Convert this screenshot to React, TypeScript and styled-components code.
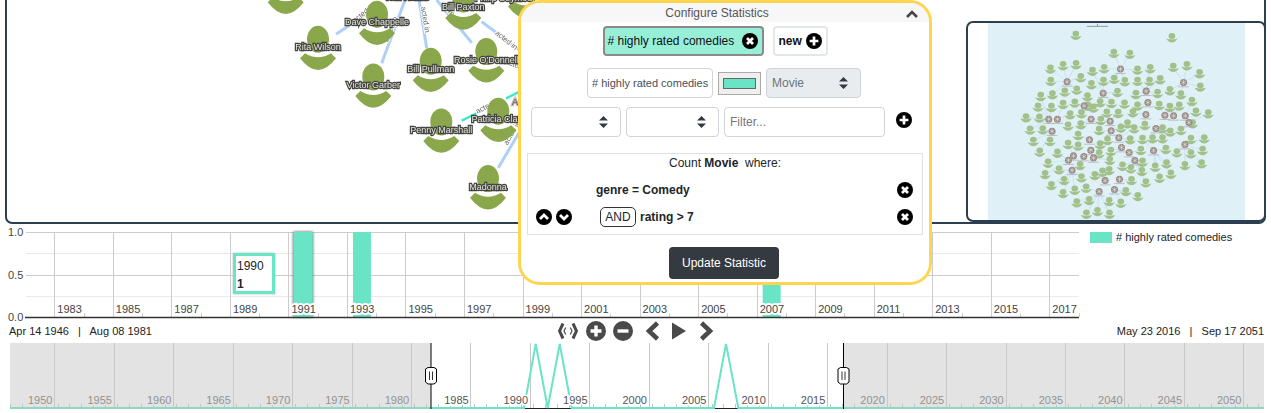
import React from 'react';
import styled, { createGlobalStyle } from 'styled-components';

const TEAL = '#69e4c5';

const GlobalStyle = createGlobalStyle`
  html, body {
    margin: 0;
    padding: 0;
    background: #fff;
    overflow: hidden;
    font-family: "Liberation Sans", Arial, sans-serif;
    color: #212529;
  }
`;

const Page = styled.div`
  position: relative;
  width: 1271px;
  height: 413px;
  overflow: hidden;
`;

/* ---------- network graph ---------- */

const GraphPanel = styled.section`
  position: relative;
  box-sizing: border-box;
  height: 227px;
  margin: -3px 5px 0 5px;
  border: 2px solid #2c3e50;
  border-radius: 0 0 7px 7px;
  overflow: hidden;
`;

const GraphCanvas = styled.svg`
  display: block;
  filter: blur(0.35px);
`;

const NodeLabel = styled.text`
  font-size: 9px;
  text-anchor: middle;
  fill: #e4e6d4;
  stroke: #444;
  stroke-width: 2.4px;
  paint-order: stroke;
`;

const MovieLabel = styled(NodeLabel)`
  fill: #7a3a3a;
  stroke: #bbb;
`;

const EdgeLabel = styled.text`
  font-size: 7.5px;
  text-anchor: middle;
  fill: #666;
  stroke: #fff;
  stroke-width: 2px;
  paint-order: stroke;
`;

interface Person {
  name: string;
  x: number;
  y: number;
}

const people: Person[] = [
  { name: '', x: 285.7, y: -8.7 },
  { name: '', x: 526, y: -4.5 },
  { name: 'Rita Wilson', x: 318, y: 47.3 },
  { name: 'Dave Chappelle', x: 377, y: 22.3 },
  { name: 'Victor Garber', x: 373.3, y: 85 },
  { name: 'Bill Pullman', x: 430.7, y: 69.3 },
  { name: "Rosie O'Donnell", x: 486.3, y: 59.7 },
  { name: 'Bill Paxton', x: 463.3, y: 7 },
  { name: 'Penny Marshall', x: 441.3, y: 130 },
  { name: 'Patricia Clark', x: 498.3, y: 119.3 },
  { name: 'Madonna', x: 488, y: 186.7 },
];

const blueEdges = [
  [336, 34.3, 380, 5],
  [381.7, 63.3, 405, 0],
  [426.7, 48.3, 419, 0],
  [471.7, 42.7, 436.7, 0],
  [481.7, 21.7, 530, 58],
  [498.3, 167.7, 520, 131],
];

const tealEdges = [[461.7, 120.7, 483.3, 110], [506, 98.3, 525, 89]];

function PersonMark({ x, y }: { x: number; y: number }) {
  return (
    <g fill="#8aa84b">
      <ellipse cx={x} cy={y - 8.1} rx={11} ry={13.5} />
      <path
        d={`M${x - 18} ${y + 11}L${x - 13} ${y + 6}Q${x} ${y + 14} ${x + 13} ${y + 6}
            L${x + 18} ${y + 11}Q${x} ${y + 34.4} ${x - 18} ${y + 11}Z`}
      />
    </g>
  );
}

function Graph() {
  return (
    <GraphCanvas width={1257} height={223} viewBox="7 -1 1257 223">
      {blueEdges.map((e, i) => (
        <line key={i} x1={e[0]} y1={e[1]} x2={e[2]} y2={e[3]} stroke="#aed0f7" strokeWidth={3} />
      ))}
      {tealEdges.map((e, i) => (
        <line key={i} x1={e[0]} y1={e[1]} x2={e[2]} y2={e[3]} stroke="#3fe8d0" strokeWidth={2.5} />
      ))}
      <EdgeLabel transform="translate(365 15) rotate(-38)">acted in</EdgeLabel>
      <EdgeLabel transform="translate(393 30) rotate(-68)">acted in</EdgeLabel>
      <EdgeLabel transform="translate(423 20) rotate(81)">acted in</EdgeLabel>
      <EdgeLabel transform="translate(451 16) rotate(53)">acted in</EdgeLabel>
      <EdgeLabel transform="translate(505 42) rotate(38)">acted in</EdgeLabel>
      <EdgeLabel transform="translate(517 68) rotate(20)">acted in</EdgeLabel>
      <EdgeLabel transform="translate(489 108) rotate(-26)">acted in</EdgeLabel>
      <EdgeLabel transform="translate(514 134) rotate(-60)">acted in</EdgeLabel>
      {people.map((p) => (
        <PersonMark key={`${p.x}`} x={p.x} y={p.y} />
      ))}
      <NodeLabel x={407} y={0}>Tom Hanks</NodeLabel>
      <NodeLabel x={505} y={1}>Philip Seymour</NodeLabel>
      <MovieLabel x={531} y={105}>A League</MovieLabel>
      {people.filter((p) => p.name).map((p) => (
        <NodeLabel key={p.name} x={p.x} y={p.y + 3}>{p.name}</NodeLabel>
      ))}
    </GraphCanvas>
  );
}

/* ---------- minimap ---------- */

const Minimap = styled.aside`
  position: absolute;
  top: 21px;
  left: 966px;
  box-sizing: border-box;
  width: 300px;
  height: 201px;
  border: 2px solid #2c3e50;
  border-radius: 7px;
  background: #fff;
  display: flex;
  justify-content: center;
  overflow: hidden;
`;

const MiniCanvas = styled.svg`
  display: block;
  background: #dff0f7;
  filter: blur(0.45px);
`;

const greens = [
  [345, 60], [633, 67], [459, 114], [507, 117], [269, 161], [307, 151], [346, 148], [395, 168], [430, 160], [530, 164],
  [568, 160], [637, 156], [678, 151], [716, 175], [270, 198], [360, 187], [392, 208], [428, 198], [460, 192], [492, 199],
  [530, 198], [566, 198], [598, 193], [718, 215], [240, 243], [275, 238], [312, 230], [348, 224], [380, 244], [470, 231],
  [525, 237], [590, 234], [627, 226], [660, 238], [693, 258], [232, 275], [272, 276], [307, 267], [342, 263], [382, 272],
  [418, 262], [452, 264], [491, 266], [530, 272], [595, 270], [627, 276], [655, 272], [196, 307], [236, 308], [328, 298],
  [362, 295], [398, 278], [438, 293], [472, 294], [516, 292], [705, 290], [742, 295], [208, 344], [246, 343], [322, 332],
  [360, 328], [420, 315], [480, 338], [500, 325], [520, 340], [552, 330], [605, 340], [628, 350], [660, 345], [695, 325],
  [218, 378], [268, 378], [352, 360], [415, 345], [440, 375], [508, 373], [545, 372], [575, 370], [605, 370], [690, 372],
  [730, 370], [237, 410], [290, 413], [322, 387], [352, 392], [418, 388], [450, 408], [540, 405], [615, 402], [648, 412],
  [690, 415], [725, 405], [262, 443], [295, 463], [358, 450], [415, 415], [447, 435], [485, 452], [545, 440], [583, 455],
  [617, 445], [672, 450], [722, 445], [253, 477], [310, 495], [362, 487], [402, 480], [445, 465], [510, 460], [543, 468],
  [596, 488], [630, 476], [272, 510], [342, 524], [376, 518], [512, 495], [555, 502], [307, 534], [495, 528], [531, 543],
  [348, 562], [385, 555], [445, 558], [480, 563], [377, 596], [410, 588], [446, 596], [425, 470],
];

const movies = [
  [479, 162], [319, 200], [668, 202], [427, 234], [556, 228], [561, 262], [370, 272], [264, 312], [290, 312], [391, 312],
  [448, 318], [555, 298], [612, 300], [638, 302], [673, 302], [684, 322], [585, 340], [451, 347], [274, 348], [474, 368],
  [386, 374], [672, 388], [482, 397], [505, 412], [578, 406], [390, 405], [338, 422], [323, 435], [369, 424], [398, 428],
  [522, 436], [334, 465], [433, 496], [476, 492], [461, 523], [415, 529],
];

function nearestMovie(x: number, y: number) {
  let best = movies[0];
  let bestDist = Infinity;
  movies.forEach((m) => {
    const d = (m[0] - x) ** 2 + (m[1] - y) ** 2;
    if (d < bestDist) {
      bestDist = d;
      best = m;
    }
  });
  // The two loose people at the top have no movie close by.
  return bestDist < 100 * 100 ? best : null;
}

function MiniGraph() {
  return (
    <MiniCanvas width={257} height={197} viewBox="82 24 770 590">
      <line x1={378} y1={34} x2={442} y2={34} stroke="#9a9a9a" strokeWidth={3} />
      <line x1={410} y1={26} x2={410} y2={34} stroke="#9a9a9a" strokeWidth={3} />
      {greens.map(([x, y]) => {
        const m = nearestMovie(x, y);
        return m && <line key={`e${x}-${y}`} x1={x} y1={y} x2={m[0]} y2={m[1]} stroke={(x + y) % 5 === 0 ? '#a8ece4' : '#b6d4ea'} strokeWidth={1.6} />;
      })}
      {greens.map(([x, y]) => (
        <g key={`g${x}-${y}`} fill="#a2c08a">
          <ellipse cx={x} cy={y - 4} rx={10} ry={9} />
          <path d={`M${x - 17} ${y + 3}Q${x} ${y + 8} ${x + 17} ${y + 3}Q${x + 10} ${y + 15} ${x} ${y + 15}Q${x - 10} ${y + 15} ${x - 17} ${y + 3}Z`} />
        </g>
      ))}
      {movies.map(([x, y]) => (
        <g key={`m${x}-${y}`}>
          <circle cx={x} cy={y} r={10.5} fill="#978a85" />
          <path d={`M${x - 7} ${y - 4}L${x + 7} ${y + 4}M${x - 7} ${y + 4}L${x + 7} ${y - 4}M${x} ${y - 8}V${y + 8}`} stroke="#e8e2de" strokeWidth={1.8} />
          <line x1={x - 16} y1={y + 13} x2={x + 16} y2={y + 13} stroke="#a8a6a4" strokeWidth={2} />
        </g>
      ))}
    </MiniCanvas>
  );
}

/* ---------- small round icons ---------- */

type GlyphKind = 'plus' | 'minus' | 'times' | 'up' | 'down';

const glyphPaths: Record<GlyphKind, string> = {
  plus: 'M3.6 8H12.4M8 3.6V12.4',
  minus: 'M3.6 8H12.4',
  times: 'M5 5L11 11M11 5L5 11',
  up: 'M4 10L8 6L12 10',
  down: 'M4 6L8 10L12 6',
};

function RoundGlyph({ kind, size = 16, color = '#000' }: { kind: GlyphKind; size?: number; color?: string }) {
  return (
    <svg width={size} height={size} viewBox="0 0 16 16" style={{ flex: 'none', display: 'block' }}>
      <circle cx={8} cy={8} r={8} fill={color} />
      <path d={glyphPaths[kind]} stroke="#fff" strokeWidth={2.7} fill="none" />
    </svg>
  );
}

function UpDown() {
  return (
    <svg width={9} height={12} viewBox="0 0 9 12">
      <path d="M4.5 0L9 4.6H0ZM0 7.4H9L4.5 12Z" fill="#343a40" />
    </svg>
  );
}

/* ---------- configure popup ---------- */

const Popup = styled.div`
  position: absolute;
  top: 0;
  left: 518px;
  box-sizing: border-box;
  width: 414px;
  height: 285px;
  border: 3px solid #ffd54f;
  border-radius: 22px;
  background: #fff;
  overflow: hidden;
  font-size: 12px;
`;

const PopupHeader = styled.header`
  position: relative;
  height: 19px;
  padding-right: 16px;
  background: #f7f7f7;
  color: #555;
  line-height: 21px;
  text-align: center;
`;

const Collapse = styled.svg`
  position: absolute;
  top: 7px;
  right: 11px;
`;

const ChipRow = styled.div`
  display: flex;
  justify-content: center;
  gap: 9px;
  height: 30px;
  margin: 4px 0 12px -20px;
`;

const Chip = styled.div<{ $active?: boolean }>`
  box-sizing: border-box;
  display: flex;
  align-items: center;
  justify-content: space-between;
  flex: none;
  padding: 0 ${(p) => (p.$active ? '4px 0 3px' : '4px')};
  border: 2px solid ${(p) => (p.$active ? '#8a8a8a' : '#e3e6ea')};
  border-radius: 4px;
  background: ${(p) => (p.$active ? '#98efd8' : '#fff')};
  font-weight: ${(p) => (p.$active ? 400 : 700)};
  white-space: nowrap;
  width: ${(p) => (p.$active ? '161px' : '55px')};
  color: #111;
`;

const FormRow = styled.div<{ $gap: number }>`
  display: flex;
  align-items: center;
  gap: ${(p) => p.$gap}px;
  height: 30px;
`;

const NameRow = styled(FormRow)`
  margin: 0 0 9px 66px;
`;

const FilterRow = styled(FormRow)`
  margin: 0 0 16px 10px;
`;

const Field = styled.div<{ $width: number; $disabled?: boolean }>`
  box-sizing: border-box;
  display: flex;
  align-items: center;
  justify-content: space-between;
  width: ${(p) => p.$width}px;
  height: 30px;
  padding: 0 12px 0 5px;
  border: 1px solid #ced4da;
  border-radius: 4px;
  background: ${(p) => (p.$disabled ? '#e9ecef' : '#fff')};
  color: ${(p) => (p.$disabled ? '#6c757d' : '#495057')};
`;

const NameField = styled(Field)`
  font-size: 11px;
  padding: 0 0 0 4px;
  white-space: nowrap;
`;

const ColorWell = styled.div`
  box-sizing: border-box;
  width: 43px;
  height: 23px;
  padding: 5px 4px;
  border: 1px solid #aaa;
  background: #efefef;
`;

const ColorFill = styled.div`
  box-sizing: border-box;
  height: 100%;
  border: 1px solid #666;
  background: ${TEAL};
`;

const Placeholder = styled.span`
  color: #777;
`;

const PlusSlot = styled.div`
  margin: -4px 0 0 6px;
`;

const RuleBox = styled.div`
  box-sizing: border-box;
  height: 82px;
  margin: 0 6px 12px 6px;
  padding-top: 2px;
  border: 1px solid #dee2e6;
`;

const RuleTitle = styled.div`
  text-align: center;
  line-height: 15px;
  margin-bottom: 5px;
`;

const RuleRow = styled.div`
  display: grid;
  grid-template-columns: 64px 1fr 16px;
  align-items: center;
  height: 27px;
  padding: 0 9px 0 8px;
  font-weight: 700;
`;

const Movers = styled.div`
  display: flex;
  gap: 4px;
`;

const RuleText = styled.div<{ $shift?: number }>`
  display: flex;
  align-items: center;
  gap: 4px;
  margin-left: ${(p) => p.$shift ?? 0}px;
`;

const AndButton = styled.span`
  box-sizing: border-box;
  display: inline-block;
  width: 36px;
  height: 20px;
  border: 1px solid #333;
  border-radius: 5px;
  text-align: center;
  line-height: 18px;
  font-weight: 400;
`;

const UpdateButton = styled.button`
  display: block;
  width: 110px;
  height: 32px;
  margin: 0 0 0 148px;
  padding: 0;
  border: 0;
  border-radius: 4px;
  background: #343a40;
  color: #fff;
  font: 400 12px "Liberation Sans", Arial, sans-serif;
`;

function ConfigurePopup() {
  return (
    <Popup>
      <PopupHeader>
        Configure Statistics
        <Collapse width={12} height={8} viewBox="0 0 12 8">
          <path d="M1 7L6 2L11 7" stroke="#444" strokeWidth={2.6} fill="none" />
        </Collapse>
      </PopupHeader>
      <ChipRow>
        <Chip $active>
          # highly rated comedies
          <RoundGlyph kind="times" />
        </Chip>
        <Chip>
          new
          <RoundGlyph kind="plus" />
        </Chip>
      </ChipRow>
      <NameRow $gap={5}>
        <NameField $width={126}># highly rated comedies</NameField>
        <ColorWell><ColorFill /></ColorWell>
        <Field $width={95} $disabled>
          Movie
          <UpDown />
        </Field>
      </NameRow>
      <FilterRow $gap={5}>
        <Field $width={90}><span /><UpDown /></Field>
        <Field $width={93}><span /><UpDown /></Field>
        <Field $width={161}><Placeholder>Filter...</Placeholder></Field>
        <PlusSlot><RoundGlyph kind="plus" /></PlusSlot>
      </FilterRow>
      <RuleBox>
        <RuleTitle>Count <b>Movie</b>&nbsp; where:</RuleTitle>
        <RuleRow>
          <span />
          <RuleText $shift={-4}>genre = Comedy</RuleText>
          <RoundGlyph kind="times" />
        </RuleRow>
        <RuleRow>
          <Movers>
            <RoundGlyph kind="up" />
            <RoundGlyph kind="down" />
          </Movers>
          <RuleText>
            <AndButton>AND</AndButton>
            rating &gt; 7
          </RuleText>
          <RoundGlyph kind="times" />
        </RuleRow>
      </RuleBox>
      <UpdateButton>Update Statistic</UpdateButton>
    </Popup>
  );
}

/* ---------- bar chart ---------- */

const ChartRow = styled.div`
  position: relative;
  height: 94px;
`;

const ChartSvg = styled.svg`
  display: block;
  overflow: visible;
  font-family: "Liberation Sans", Arial, sans-serif;
`;

const Tooltip = styled.div`
  position: absolute;
  top: 29px;
  left: 233px;
  box-sizing: border-box;
  width: 42px;
  height: 41px;
  padding: 1px 0 0 1px;
  border: 3px solid ${TEAL};
  background: #fff;
  font-size: 12px;
  line-height: 18px;
  box-shadow: 0 0 2px #bbb;
`;

const Legend = styled.div`
  position: absolute;
  top: 8px;
  left: 1090px;
  display: flex;
  align-items: center;
  gap: 4px;
  font-size: 11px;
  line-height: 11px;
`;

const Swatch = styled.i`
  width: 22px;
  height: 11px;
  background: ${TEAL};
`;

const yearX = (year: number) => 54.3 + (year - 1983) * 29.265;
const labelYears = Array.from({ length: 18 }, (_, i) => 1983 + i * 2);
const barYears = [1991, 1993, 2007];

function BarChart() {
  return (
    <ChartSvg width={1271} height={94} viewBox="0 224 1271 94">
      {[232.5, 275.5].map((y) => (
        <line key={y} x1={26} x2={1079} y1={y} y2={y} stroke="#ccc" />
      ))}
      {[253.5, 296.5].map((y) => (
        <line key={y} x1={26} x2={1079} y1={y} y2={y} stroke="#eaeaea" />
      ))}
      {labelYears.map((y) => (
        <line key={y} x1={Math.round(yearX(y)) + 0.5} x2={Math.round(yearX(y)) + 0.5} y1={232} y2={317} stroke="#ccc" />
      ))}
      {labelYears.map((y) => (
        <line key={y} x1={Math.round(yearX(y) + 29.3) + 0.5} x2={Math.round(yearX(y) + 29.3) + 0.5} y1={313} y2={317} stroke="#ccc" />
      ))}
      {barYears.map((y) => (
        <rect
          key={y}
          x={y === 1991 ? 293.4 : yearX(y) + 6}
          y={232}
          width={y === 1991 ? 19.3 : 18}
          height={85}
          fill={TEAL}
          style={y === 1991 ? { filter: 'drop-shadow(0 0 1.5px #444)' } : undefined}
        />
      ))}
      {labelYears.map((y) => (
        <text key={y} x={yearX(y) + 3} y={313} fontSize={11} fill="#444" stroke="#fff" strokeWidth={4} style={{ paintOrder: 'stroke' }}>
          {y}
        </text>
      ))}
      <line x1={25} x2={1079} y1={317.5} y2={317.5} stroke="#333" strokeWidth={1.6} />
      <text x={8} y={236} fontSize={11} fill="#444">1.0</text>
      <text x={8} y={279} fontSize={11} fill="#444">0.5</text>
      <text x={8} y={321} fontSize={11} fill="#444">0.0</text>
    </ChartSvg>
  );
}

/* ---------- dates and timeline controls ---------- */

const ControlRow = styled.div`
  display: grid;
  grid-template-columns: 1fr auto 1fr;
  align-items: center;
  height: 25px;
  padding: 0 7px 0 9px;
  font-size: 11px;
  color: #222;
`;

const DateRight = styled.div`
  text-align: right;
`;

const Transport = styled.div`
  display: flex;
  align-items: center;
  margin-left: -2px;
`;

const TransportIcon = styled.svg<{ $gap?: number }>`
  display: block;
  flex: none;
  margin-left: ${(p) => p.$gap ?? 0}px;
  color: #4a4a4a;
`;

const RoundSlot = styled.div<{ $gap: number }>`
  margin-left: ${(p) => p.$gap}px;
`;

function Controls() {
  return (
    <Transport>
      <TransportIcon width={20} height={20} viewBox="0 0 20 20">
        <path d="M5 2.5L1.5 10L5 17.5M15 2.5L18.5 10L15 17.5" stroke="currentColor" strokeWidth={3} fill="none" />
        <path d="M7.8 6.5L6 10L7.8 13.5M12.2 6.5L14 10L12.2 13.5" stroke="currentColor" strokeWidth={1.2} fill="none" />
      </TransportIcon>
      <RoundSlot $gap={8}><RoundGlyph kind="plus" size={20} color="#4a4a4a" /></RoundSlot>
      <RoundSlot $gap={7}><RoundGlyph kind="minus" size={20} color="#4a4a4a" /></RoundSlot>
      <TransportIcon $gap={11} width={16} height={20} viewBox="0 0 16 20">
        <path d="M13.5 2L5 10L13.5 18" stroke="currentColor" strokeWidth={4.5} fill="none" />
      </TransportIcon>
      <TransportIcon $gap={12} width={14} height={20} viewBox="0 0 14 20">
        <path d="M0 1.5L14 10L0 18.5Z" fill="currentColor" />
      </TransportIcon>
      <TransportIcon $gap={13} width={15} height={20} viewBox="0 0 15 20">
        <path d="M2.5 2L11 10L2.5 18" stroke="currentColor" strokeWidth={4.5} fill="none" />
      </TransportIcon>
    </Transport>
  );
}

/* ---------- brush timeline ---------- */

const Brush = styled.div`
  position: relative;
  height: 67px;
  margin: 0 7px 0 10px;
`;

const BrushSvg = styled.svg`
  display: block;
  font-family: "Liberation Sans", Arial, sans-serif;
`;

const gridLines = Array.from({ length: 21 }, (_, i) => 54.3 + i * 59.45);
const decades = gridLines.map((x, i) => ({ x, year: 1950 + i * 5 }));
const minorTicks = Array.from({ length: 106 }, (_, i) => 10 + i * 11.89);
const SEL_LEFT = 431;
const SEL_RIGHT = 843.5;

function Handle({ x }: { x: number }) {
  return (
    <g>
      <line x1={x} x2={x} y1={343} y2={409} stroke="#000" strokeWidth={1} />
      <path
        d={`M${x - 5.5} 369L${x - 3} 367.5H${x + 3}L${x + 5.5} 369V382L${x + 3} 384H${x - 3}L${x - 5.5} 382Z`}
        fill="#fff"
        stroke="#000"
      />
      <path d={`M${x - 1.5} 371.5V380M${x + 1.5} 371.5V380`} stroke="#333" />
    </g>
  );
}

function Timeline() {
  return (
    <BrushSvg width={1254} height={67} viewBox="10 343 1254 67">
      <rect x={10} y={343} width={421} height={66} fill="#e3e3e3" />
      <rect x={843.5} y={343} width={421} height={66} fill="#e3e3e3" />
      {gridLines.map((x) => (
        <line key={x} x1={Math.round(x) + 0.5} x2={Math.round(x) + 0.5} y1={343} y2={408} stroke="#c8c8c8" />
      ))}
      {minorTicks.map((x) => (
        <line key={x} x1={Math.round(x) + 0.5} x2={Math.round(x) + 0.5} y1={404} y2={408} stroke="#c4c4c4" />
      ))}
      <line x1={431} x2={843} y1={408.5} y2={408.5} stroke="#222" />
      <path
        d="M10 408H524L535.7 344L547.7 408L559.7 344L571.7 408H714L726 344L738.3 408H1264"
        fill="none"
        stroke={TEAL}
        strokeWidth={2}
      />
      <rect x={10} y={407} width={421} height={2} fill="#8fd6c4" />
      <rect x={843.5} y={407} width={421} height={2} fill="#8fd6c4" />
      {decades.map(({ x, year }) => {
        const inside = x - 26 > SEL_LEFT && x < SEL_RIGHT;
        return (
          <text
            key={year}
            x={x - 26.3}
            y={404}
            fontSize={11}
            fill={inside ? '#555' : '#929292'}
            stroke={inside ? '#fff' : '#e3e3e3'}
            strokeWidth={3}
            style={{ paintOrder: 'stroke' }}
          >
            {year}
          </text>
        );
      })}
      <Handle x={431} />
      <Handle x={843.5} />
    </BrushSvg>
  );
}

export default function App() {
  return (
    <Page>
      <GlobalStyle />
      <GraphPanel>
        <Graph />
      </GraphPanel>
      <ChartRow>
        <BarChart />
        <Tooltip>
          1990
          <br />
          <b>1</b>
        </Tooltip>
        <Legend>
          <Swatch />
          # highly rated comedies
        </Legend>
      </ChartRow>
      <ControlRow>
        <span>Apr 14 1946 &nbsp;&nbsp;|&nbsp;&nbsp; Aug 08 1981</span>
        <Controls />
        <DateRight>May 23 2016 &nbsp;&nbsp;|&nbsp;&nbsp; Sep 17 2051</DateRight>
      </ControlRow>
      <Brush>
        <Timeline />
      </Brush>
      <Minimap>
        <MiniGraph />
      </Minimap>
      <ConfigurePopup />
    </Page>
  );
}
